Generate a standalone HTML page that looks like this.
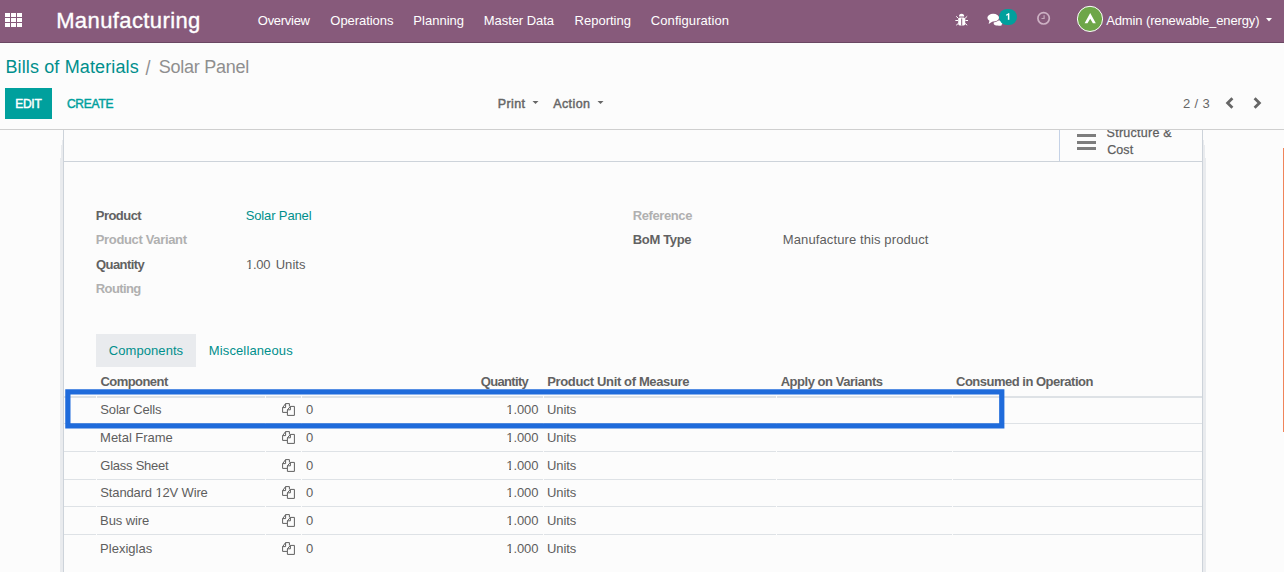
<!DOCTYPE html>
<html><head><meta charset="utf-8"><style>
html,body{margin:0;padding:0}
body{width:1284px;height:572px;overflow:hidden;position:relative;background:#fcfcfc;font-family:"Liberation Sans",sans-serif}
.t{position:absolute;white-space:pre;line-height:20px;font-family:"Liberation Sans",sans-serif}
.r{position:absolute}
.one{display:inline-block;clip-path:polygon(0 0,100% 0,100% calc(100% - 6.9px),0.36em calc(100% - 6.9px),0.36em 100%,0.22em 100%,0.22em calc(100% - 6.9px),0 calc(100% - 6.9px))}
</style></head><body>
<!-- navbar -->
<div class="r" style="left:0;top:0;width:1284px;height:42px;background:#875a7b"></div>
<div class="r" style="left:0;top:42px;width:1284px;height:1px;background:#6a4763"></div>
<div class="r" style="left:5px;top:13px;width:5px;height:4px;background:#fff"></div><div class="r" style="left:5px;top:18px;width:5px;height:4px;background:#fff"></div><div class="r" style="left:5px;top:23px;width:5px;height:4px;background:#fff"></div><div class="r" style="left:11px;top:13px;width:5px;height:4px;background:#fff"></div><div class="r" style="left:11px;top:18px;width:5px;height:4px;background:#fff"></div><div class="r" style="left:11px;top:23px;width:5px;height:4px;background:#fff"></div><div class="r" style="left:17px;top:13px;width:5px;height:4px;background:#fff"></div><div class="r" style="left:17px;top:18px;width:5px;height:4px;background:#fff"></div><div class="r" style="left:17px;top:23px;width:5px;height:4px;background:#fff"></div>
<!-- bug icon -->
<svg class="r" style="left:954px;top:12px" width="16" height="16" viewBox="0 0 16 16">
<path d="M5 4.6 Q5 1.8 7.6 1.8 Q10.2 1.8 10.2 4.6 Z" fill="#fff"/>
<rect x="4.2" y="5.6" width="7" height="7.8" rx="1.6" fill="#fff"/>
<rect x="7.2" y="6.5" width="1" height="7" fill="#875a7b"/>
<path d="M2.2 4.3 L4.4 6.4 M13.2 4.3 L11 6.4 M1.4 8.5 L4 8.5 M14 8.5 L11.4 8.5 M2.2 13.2 L4.4 11.4 M13.2 13.2 L11 11.4" stroke="#fff" stroke-width="1"/>
</svg>
<!-- chat icon -->
<svg class="r" style="left:985px;top:10px" width="20" height="18" viewBox="0 0 20 18">
<ellipse cx="13" cy="12.9" rx="4.4" ry="2.6" fill="#fff"/>
<path d="M14.5 14.5 L17.2 15.8 L12.5 15.3 Z" fill="#fff"/>
<ellipse cx="8.2" cy="7.7" rx="5.8" ry="3.9" fill="#fff" stroke="#875a7b" stroke-width="1.6"/>
<path d="M4.6 10 L3.6 13.9 L8 11.2 Z" fill="#fff"/>
<ellipse cx="8.2" cy="7.7" rx="5.8" ry="3.9" fill="#fff"/>
</svg>
<div class="r" style="left:999px;top:9px;width:18px;height:16px;border-radius:8px;background:#00a09d"></div>
<svg class="r" style="left:1003px;top:11px" width="10" height="11" viewBox="0 0 10 11"><path d="M5.6 2.3 L5.6 8.8" stroke="#fff" stroke-width="1.5"/><path d="M6.2 2.2 L3.1 3.6 L3.1 4.7 L5.2 3.9 Z" fill="#fff"/></svg>
<!-- clock -->
<svg class="r" style="left:1034px;top:9px" width="20" height="20" viewBox="0 0 20 20">
<circle cx="9.6" cy="9.3" r="5.7" fill="none" stroke="#cdb1c4" stroke-width="1.7"/>
<path d="M10.1 6.2 L10.1 9.5 L7.5 9.5" fill="none" stroke="#c4a8bb" stroke-width="1.2"/>
</svg>
<!-- avatar -->
<svg class="r" style="left:1076px;top:5px" width="28" height="28" viewBox="0 0 28 28">
<circle cx="14" cy="13.9" r="12.6" fill="#6ea648" stroke="#fff" stroke-width="1"/>
<path d="M14.2 7.9 L19.8 18.2 L16.9 18.2 L14.2 13.7 L11.5 18.2 L8.6 18.2 Z" fill="#fff"/>
</svg>
<svg class="r" style="left:1265px;top:17px" width="8" height="6" viewBox="0 0 8 6"><path d="M1 1 L7 1 L4 4.5 Z" fill="#fff"/></svg>

<!-- control panel -->
<div class="r" style="left:5px;top:88px;width:47px;height:31px;background:#00a09d"></div>
<svg class="r" style="left:531px;top:99px" width="10" height="8" viewBox="0 0 10 8"><path d="M1.5 2 L7.5 2 L4.5 5 Z" fill="#666"/></svg>
<svg class="r" style="left:596px;top:99px" width="10" height="8" viewBox="0 0 10 8"><path d="M1.5 2 L7.5 2 L4.5 5 Z" fill="#666"/></svg>
<svg class="r" style="left:1222px;top:95px" width="40" height="16" viewBox="0 0 40 16">
<path d="M10.4 3.2 L5.6 8 L10.4 12.8" fill="none" stroke="#666" stroke-width="2.8"/>
<path d="M32.6 3.2 L37.4 8 L32.6 12.8" fill="none" stroke="#666" stroke-width="2.8"/>
</svg>
<div class="r" style="left:0;top:129px;width:1284px;height:1px;background:#cfcfcf"></div>

<!-- sheet -->
<div class="r" style="left:62px;top:140px;width:1px;height:432px;background:#e9ebee"></div>
<div class="r" style="left:61px;top:145px;width:1px;height:427px;background:#e9ebee"></div>
<div class="r" style="left:60px;top:158px;width:1px;height:414px;background:#e9ebee"></div>
<div class="r" style="left:1203px;top:140px;width:1px;height:432px;background:#e9ebee"></div>
<div class="r" style="left:1204px;top:145px;width:1px;height:427px;background:#e9ebee"></div>
<div class="r" style="left:1205px;top:158px;width:1px;height:414px;background:#e9ebee"></div>
<div class="r" style="left:63px;top:130px;width:1px;height:442px;background:#cdd3da"></div>
<div class="r" style="left:1202px;top:130px;width:1px;height:442px;background:#cdd3da"></div>
<div class="r" style="left:64px;top:161px;width:1138px;height:1px;background:#cdd3da"></div>
<div class="r" style="left:1059px;top:130px;width:1px;height:31px;background:#c5d2e6"></div>
<div class="r" style="left:1077px;top:134px;width:19px;height:3px;background:#7d7d7d"></div>
<div class="r" style="left:1077px;top:141px;width:19px;height:3px;background:#7d7d7d"></div>
<div class="r" style="left:1077px;top:147px;width:19px;height:3px;background:#7d7d7d"></div>

<div class="r" style="left:96px;top:334px;width:100px;height:33px;background:#e9ebee"></div>
<div class="r" style="left:64px;top:396px;width:1138px;height:2px;background:#dee2e6"></div>
<div class="r" style="left:64px;top:423px;width:1138px;height:1px;background:#dee2e6"></div><div class="r" style="left:64px;top:451px;width:1138px;height:1px;background:#dee2e6"></div><div class="r" style="left:64px;top:479px;width:1138px;height:1px;background:#dee2e6"></div><div class="r" style="left:64px;top:506px;width:1138px;height:1px;background:#dee2e6"></div><div class="r" style="left:64px;top:534px;width:1138px;height:1px;background:#dee2e6"></div><div class="r" style="left:96px;top:396px;width:1px;height:2px;background:#fcfcfc"></div><div class="r" style="left:96px;top:423px;width:1px;height:1px;background:#fcfcfc"></div><div class="r" style="left:96px;top:451px;width:1px;height:1px;background:#fcfcfc"></div><div class="r" style="left:96px;top:479px;width:1px;height:1px;background:#fcfcfc"></div><div class="r" style="left:96px;top:506px;width:1px;height:1px;background:#fcfcfc"></div><div class="r" style="left:96px;top:534px;width:1px;height:1px;background:#fcfcfc"></div><div class="r" style="left:265px;top:396px;width:1px;height:2px;background:#fcfcfc"></div><div class="r" style="left:265px;top:423px;width:1px;height:1px;background:#fcfcfc"></div><div class="r" style="left:265px;top:451px;width:1px;height:1px;background:#fcfcfc"></div><div class="r" style="left:265px;top:479px;width:1px;height:1px;background:#fcfcfc"></div><div class="r" style="left:265px;top:506px;width:1px;height:1px;background:#fcfcfc"></div><div class="r" style="left:265px;top:534px;width:1px;height:1px;background:#fcfcfc"></div><div class="r" style="left:301px;top:396px;width:1px;height:2px;background:#fcfcfc"></div><div class="r" style="left:301px;top:423px;width:1px;height:1px;background:#fcfcfc"></div><div class="r" style="left:301px;top:451px;width:1px;height:1px;background:#fcfcfc"></div><div class="r" style="left:301px;top:479px;width:1px;height:1px;background:#fcfcfc"></div><div class="r" style="left:301px;top:506px;width:1px;height:1px;background:#fcfcfc"></div><div class="r" style="left:301px;top:534px;width:1px;height:1px;background:#fcfcfc"></div><div class="r" style="left:543px;top:396px;width:1px;height:2px;background:#fcfcfc"></div><div class="r" style="left:543px;top:423px;width:1px;height:1px;background:#fcfcfc"></div><div class="r" style="left:543px;top:451px;width:1px;height:1px;background:#fcfcfc"></div><div class="r" style="left:543px;top:479px;width:1px;height:1px;background:#fcfcfc"></div><div class="r" style="left:543px;top:506px;width:1px;height:1px;background:#fcfcfc"></div><div class="r" style="left:543px;top:534px;width:1px;height:1px;background:#fcfcfc"></div><div class="r" style="left:776px;top:396px;width:1px;height:2px;background:#fcfcfc"></div><div class="r" style="left:776px;top:423px;width:1px;height:1px;background:#fcfcfc"></div><div class="r" style="left:776px;top:451px;width:1px;height:1px;background:#fcfcfc"></div><div class="r" style="left:776px;top:479px;width:1px;height:1px;background:#fcfcfc"></div><div class="r" style="left:776px;top:506px;width:1px;height:1px;background:#fcfcfc"></div><div class="r" style="left:776px;top:534px;width:1px;height:1px;background:#fcfcfc"></div><div class="r" style="left:952px;top:396px;width:1px;height:2px;background:#fcfcfc"></div><div class="r" style="left:952px;top:423px;width:1px;height:1px;background:#fcfcfc"></div><div class="r" style="left:952px;top:451px;width:1px;height:1px;background:#fcfcfc"></div><div class="r" style="left:952px;top:479px;width:1px;height:1px;background:#fcfcfc"></div><div class="r" style="left:952px;top:506px;width:1px;height:1px;background:#fcfcfc"></div><div class="r" style="left:952px;top:534px;width:1px;height:1px;background:#fcfcfc"></div>
<svg width="16" height="16" viewBox="0 0 16 16" style="position:absolute;left:280px;top:401px" fill="none" stroke="#606060" stroke-width="1">
<path d="M2.6 6.6 L2.6 11.4 L7 11.4 M2.6 6.6 L5.6 2.6 L9.4 2.6 L9.4 5.4 M2.6 6.6 L5.6 6.6 L5.6 2.6"/>
<path d="M7.4 8.8 L7.4 14.4 L14.4 14.4 L14.4 5.4 L10.4 5.4 Z M7.4 8.8 L10.4 8.8 L10.4 5.4"/>
</svg><svg width="16" height="16" viewBox="0 0 16 16" style="position:absolute;left:280px;top:429px" fill="none" stroke="#606060" stroke-width="1">
<path d="M2.6 6.6 L2.6 11.4 L7 11.4 M2.6 6.6 L5.6 2.6 L9.4 2.6 L9.4 5.4 M2.6 6.6 L5.6 6.6 L5.6 2.6"/>
<path d="M7.4 8.8 L7.4 14.4 L14.4 14.4 L14.4 5.4 L10.4 5.4 Z M7.4 8.8 L10.4 8.8 L10.4 5.4"/>
</svg><svg width="16" height="16" viewBox="0 0 16 16" style="position:absolute;left:280px;top:457px" fill="none" stroke="#606060" stroke-width="1">
<path d="M2.6 6.6 L2.6 11.4 L7 11.4 M2.6 6.6 L5.6 2.6 L9.4 2.6 L9.4 5.4 M2.6 6.6 L5.6 6.6 L5.6 2.6"/>
<path d="M7.4 8.8 L7.4 14.4 L14.4 14.4 L14.4 5.4 L10.4 5.4 Z M7.4 8.8 L10.4 8.8 L10.4 5.4"/>
</svg><svg width="16" height="16" viewBox="0 0 16 16" style="position:absolute;left:280px;top:484px" fill="none" stroke="#606060" stroke-width="1">
<path d="M2.6 6.6 L2.6 11.4 L7 11.4 M2.6 6.6 L5.6 2.6 L9.4 2.6 L9.4 5.4 M2.6 6.6 L5.6 6.6 L5.6 2.6"/>
<path d="M7.4 8.8 L7.4 14.4 L14.4 14.4 L14.4 5.4 L10.4 5.4 Z M7.4 8.8 L10.4 8.8 L10.4 5.4"/>
</svg><svg width="16" height="16" viewBox="0 0 16 16" style="position:absolute;left:280px;top:512px" fill="none" stroke="#606060" stroke-width="1">
<path d="M2.6 6.6 L2.6 11.4 L7 11.4 M2.6 6.6 L5.6 2.6 L9.4 2.6 L9.4 5.4 M2.6 6.6 L5.6 6.6 L5.6 2.6"/>
<path d="M7.4 8.8 L7.4 14.4 L14.4 14.4 L14.4 5.4 L10.4 5.4 Z M7.4 8.8 L10.4 8.8 L10.4 5.4"/>
</svg><svg width="16" height="16" viewBox="0 0 16 16" style="position:absolute;left:280px;top:540px" fill="none" stroke="#606060" stroke-width="1">
<path d="M2.6 6.6 L2.6 11.4 L7 11.4 M2.6 6.6 L5.6 2.6 L9.4 2.6 L9.4 5.4 M2.6 6.6 L5.6 6.6 L5.6 2.6"/>
<path d="M7.4 8.8 L7.4 14.4 L14.4 14.4 L14.4 5.4 L10.4 5.4 Z M7.4 8.8 L10.4 8.8 L10.4 5.4"/>
</svg>
<span class="t" style="left:55.85px;top:11.0px;font-size:22px;font-weight:400;color:#ffffff;letter-spacing:0.396px;-webkit-text-stroke:0.35px #fff;transform:translate(0.3px,-0.4px);">Manufacturing</span>
<span class="t" style="left:257.85px;top:11.0px;font-size:13px;font-weight:400;color:#ffffff;letter-spacing:-0.293px;">Overview</span>
<span class="t" style="left:330.35px;top:11.0px;font-size:13px;font-weight:400;color:#ffffff;letter-spacing:-0.061px;">Operations</span>
<span class="t" style="left:413.3px;top:11.0px;font-size:13px;font-weight:400;color:#ffffff;letter-spacing:0.028px;">Planning</span>
<span class="t" style="left:483.8px;top:11.0px;font-size:13px;font-weight:400;color:#ffffff;letter-spacing:-0.065px;">Master Data</span>
<span class="t" style="left:574.6px;top:11.0px;font-size:13px;font-weight:400;color:#ffffff;letter-spacing:-0.007px;">Reporting</span>
<span class="t" style="left:650.85px;top:11.0px;font-size:13px;font-weight:400;color:#ffffff;letter-spacing:0.071px;">Configuration</span>
<span class="t" style="left:1106.2px;top:11.0px;font-size:13px;font-weight:400;color:#ffffff;letter-spacing:-0.118px;">Admin (renewable_energy)</span>
<span class="t" style="left:5.4px;top:57.0px;font-size:18px;font-weight:400;color:#008f8c;letter-spacing:0.136px;">Bills of Materials</span>
<span class="t" style="left:145.6px;top:57.0px;font-size:18px;font-weight:400;color:#8f8f8f;transform-origin:50% 0;transform:scaleY(1.12);">/</span>
<span class="t" style="left:158.75px;top:57.0px;font-size:18px;font-weight:400;color:#8f8f8f;letter-spacing:-0.25px;">Solar Panel</span>
<span class="t" style="left:15.3px;top:94.0px;font-size:12px;font-weight:400;color:#ffffff;letter-spacing:-0.301px;-webkit-text-stroke:0.45px currentColor;">EDIT</span>
<span class="t" style="left:66.9px;top:94.0px;font-size:12px;font-weight:400;color:#00a09d;letter-spacing:-0.22px;-webkit-text-stroke:0.45px currentColor;">CREATE</span>
<span class="t" style="left:497.8px;top:94.0px;font-size:12.5px;font-weight:400;color:#666666;letter-spacing:0.399px;-webkit-text-stroke:0.45px currentColor;">Print</span>
<span class="t" style="left:553.2px;top:94.0px;font-size:12.5px;font-weight:400;color:#666666;letter-spacing:0.41px;-webkit-text-stroke:0.45px currentColor;">Action</span>
<span class="t" style="left:1183.05px;top:94.0px;font-size:13px;font-weight:400;color:#666666;letter-spacing:0.338px;">2 / 3</span>
<span class="t" style="left:1106.55px;top:123.0px;font-size:12.5px;font-weight:400;color:#5e5e5e;letter-spacing:0.26px;-webkit-text-stroke:0.25px currentColor;">Structure &amp;</span>
<span class="t" style="left:1107.15px;top:140.0px;font-size:12.5px;font-weight:400;color:#5e5e5e;letter-spacing:0.099px;-webkit-text-stroke:0.25px currentColor;">Cost</span>
<span class="t" style="left:95.75px;top:206.0px;font-size:13px;font-weight:700;color:#626262;letter-spacing:-0.533px;">Product</span>
<span class="t" style="left:95.75px;top:230.0px;font-size:13px;font-weight:700;color:#b0b0b0;letter-spacing:-0.342px;">Product Variant</span>
<span class="t" style="left:96.0px;top:255.0px;font-size:13px;font-weight:700;color:#626262;letter-spacing:-0.564px;">Quantity</span>
<span class="t" style="left:95.75px;top:279.0px;font-size:13px;font-weight:700;color:#b0b0b0;letter-spacing:-0.601px;">Routing</span>
<span class="t" style="left:245.75px;top:206.0px;font-size:13px;font-weight:400;color:#008f8c;letter-spacing:-0.14px;">Solar Panel</span>
<span class="t" style="left:245.9px;top:255.0px;font-size:13px;font-weight:400;color:#5e5e5e;letter-spacing:-0.234px;"><span class="one">1</span>.00</span>
<span class="t" style="left:275.7px;top:255.0px;font-size:13px;font-weight:400;color:#5e5e5e;letter-spacing:0.036px;">Units</span>
<span class="t" style="left:632.85px;top:206.0px;font-size:13px;font-weight:700;color:#b0b0b0;letter-spacing:-0.419px;">Reference</span>
<span class="t" style="left:632.85px;top:230.0px;font-size:13px;font-weight:700;color:#626262;letter-spacing:-0.364px;">BoM Type</span>
<span class="t" style="left:782.8px;top:230.0px;font-size:13px;font-weight:400;color:#5e5e5e;letter-spacing:0.109px;">Manufacture this product</span>
<span class="t" style="left:108.85px;top:341.0px;font-size:13px;font-weight:400;color:#008f8c;letter-spacing:0.061px;">Components</span>
<span class="t" style="left:208.8px;top:341.0px;font-size:13px;font-weight:400;color:#008f8c;letter-spacing:0.125px;">Miscellaneous</span>
<span class="t" style="left:100.5px;top:372.0px;font-size:13px;font-weight:700;color:#626262;letter-spacing:-0.557px;">Component</span>
<span class="t" style="left:480.85px;top:372.0px;font-size:13px;font-weight:700;color:#626262;letter-spacing:-0.685px;">Quantity</span>
<span class="t" style="left:547.25px;top:372.0px;font-size:13px;font-weight:700;color:#626262;letter-spacing:-0.366px;">Product Unit of Measure</span>
<span class="t" style="left:780.65px;top:372.0px;font-size:13px;font-weight:700;color:#626262;letter-spacing:-0.462px;">Apply on Variants</span>
<span class="t" style="left:956.0px;top:372.0px;font-size:13px;font-weight:700;color:#626262;letter-spacing:-0.498px;">Consumed in Operation</span>
<span class="t" style="left:100.35px;top:400.0px;font-size:13px;font-weight:400;color:#5e5e5e;letter-spacing:-0.18px;">Solar Cells</span>
<span class="t" style="left:305.9px;top:400.0px;font-size:13px;font-weight:400;color:#5e5e5e;">0</span>
<span class="t" style="left:506.3px;top:400.0px;font-size:13px;font-weight:400;color:#5e5e5e;letter-spacing:-0.101px;"><span class="one">1</span>.000</span>
<span class="t" style="left:547.0px;top:400.0px;font-size:13px;font-weight:400;color:#5e5e5e;letter-spacing:-0.062px;">Units</span>
<span class="t" style="left:100.1px;top:428.0px;font-size:13px;font-weight:400;color:#5e5e5e;letter-spacing:-0.02px;">Metal Frame</span>
<span class="t" style="left:305.9px;top:428.0px;font-size:13px;font-weight:400;color:#5e5e5e;">0</span>
<span class="t" style="left:506.3px;top:428.0px;font-size:13px;font-weight:400;color:#5e5e5e;letter-spacing:-0.101px;"><span class="one">1</span>.000</span>
<span class="t" style="left:547.0px;top:428.0px;font-size:13px;font-weight:400;color:#5e5e5e;letter-spacing:-0.062px;">Units</span>
<span class="t" style="left:100.35px;top:456.0px;font-size:13px;font-weight:400;color:#5e5e5e;letter-spacing:-0.26px;">Glass Sheet</span>
<span class="t" style="left:305.9px;top:456.0px;font-size:13px;font-weight:400;color:#5e5e5e;">0</span>
<span class="t" style="left:506.3px;top:456.0px;font-size:13px;font-weight:400;color:#5e5e5e;letter-spacing:-0.101px;"><span class="one">1</span>.000</span>
<span class="t" style="left:547.0px;top:456.0px;font-size:13px;font-weight:400;color:#5e5e5e;letter-spacing:-0.062px;">Units</span>
<span class="t" style="left:100.35px;top:483.0px;font-size:13px;font-weight:400;color:#5e5e5e;letter-spacing:-0.15px;">Standard <span class="one">1</span>2V Wire</span>
<span class="t" style="left:305.9px;top:483.0px;font-size:13px;font-weight:400;color:#5e5e5e;">0</span>
<span class="t" style="left:506.3px;top:483.0px;font-size:13px;font-weight:400;color:#5e5e5e;letter-spacing:-0.101px;"><span class="one">1</span>.000</span>
<span class="t" style="left:547.0px;top:483.0px;font-size:13px;font-weight:400;color:#5e5e5e;letter-spacing:-0.062px;">Units</span>
<span class="t" style="left:100.1px;top:511.0px;font-size:13px;font-weight:400;color:#5e5e5e;letter-spacing:-0.086px;">Bus wire</span>
<span class="t" style="left:305.9px;top:511.0px;font-size:13px;font-weight:400;color:#5e5e5e;">0</span>
<span class="t" style="left:506.3px;top:511.0px;font-size:13px;font-weight:400;color:#5e5e5e;letter-spacing:-0.101px;"><span class="one">1</span>.000</span>
<span class="t" style="left:547.0px;top:511.0px;font-size:13px;font-weight:400;color:#5e5e5e;letter-spacing:-0.062px;">Units</span>
<span class="t" style="left:100.1px;top:539.0px;font-size:13px;font-weight:400;color:#5e5e5e;letter-spacing:0.005px;">Plexiglas</span>
<span class="t" style="left:305.9px;top:539.0px;font-size:13px;font-weight:400;color:#5e5e5e;">0</span>
<span class="t" style="left:506.3px;top:539.0px;font-size:13px;font-weight:400;color:#5e5e5e;letter-spacing:-0.101px;"><span class="one">1</span>.000</span>
<span class="t" style="left:547.0px;top:539.0px;font-size:13px;font-weight:400;color:#5e5e5e;letter-spacing:-0.062px;">Units</span>
<!-- top clip for structure text -->
<div class="r" style="left:1060px;top:118px;width:142px;height:11px;background:#fcfcfc"></div>
<div class="r" style="left:1000px;top:129px;width:284px;height:1px;background:#cfcfcf"></div>
<!-- blue highlight -->
<svg class="r" style="left:0;top:0" width="1284" height="572"><rect x="67.875" y="391.875" width="933.9" height="34" fill="none" stroke="#1f6bdb" stroke-width="5.25"/></svg>
<!-- orange line -->
<div class="r" style="left:1283px;top:148px;width:1px;height:284px;background:#f0845a"></div>
</body></html>
